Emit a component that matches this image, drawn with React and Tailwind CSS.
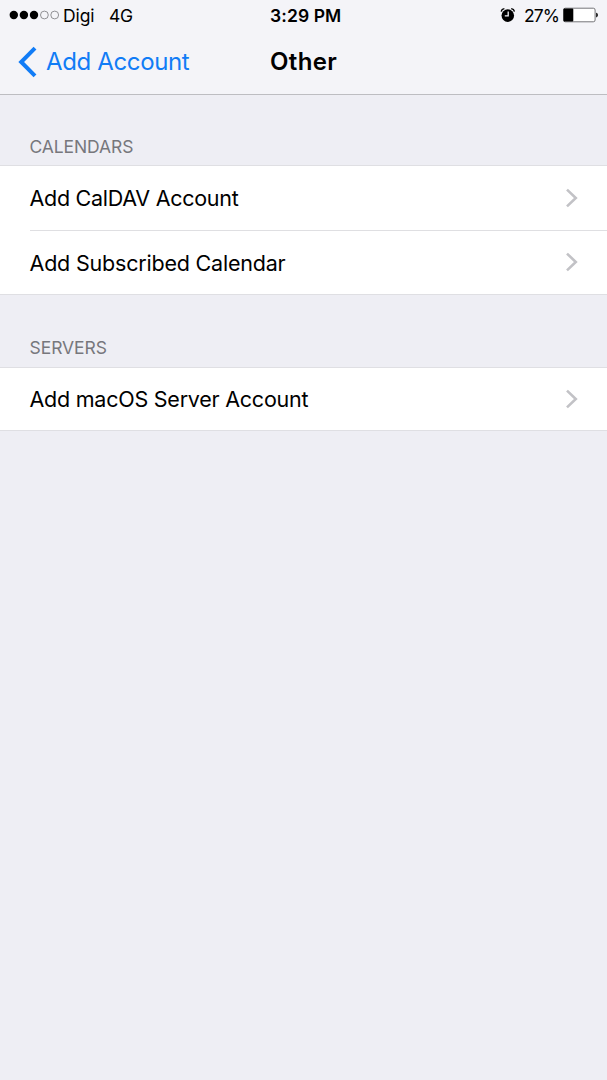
import React from 'react';

const sections = [
  {
    title: 'CALENDARS',
    titleClass: 'h-[70px] pb-[6px] tracking-[-0.1px]',
    rows: [
      { name: 'Add CalDAV Account', className: 'h-[64px] tracking-[-0.28px]' },
      { name: 'Add Subscribed Calendar', className: 'h-[63px] tracking-[-0.2px]', labelClass: 'pt-px' },
    ],
  },
  {
    title: 'SERVERS',
    titleClass: 'h-[72px] pb-[7px] tracking-[-0.05px]',
    rows: [{ name: 'Add macOS Server Account', className: 'h-[62px] tracking-[-0.24px]' }],
  },
];

function StatusBar() {
  return (
    <div className="grid grid-cols-[270px_1fr_108px] items-center h-[31px] text-[17.5px] leading-[31px] whitespace-nowrap">
      <div className="flex items-center pl-[9px]">
        <svg className="mb-px" width="51" height="10" viewBox="0 0 51 10">
          <circle cx="4.8" cy="5" r="4.2" />
          <circle cx="14.9" cy="5" r="4.2" />
          <circle cx="25" cy="5" r="4.2" />
          <circle cx="35.4" cy="5" r="3.9" fill="none" stroke="#77777b" strokeWidth="0.8" />
          <circle cx="45.7" cy="5" r="3.9" fill="none" stroke="#77777b" strokeWidth="0.8" />
        </svg>
        <span className="ml-[3px] w-[46px] tracking-[-0.1px]">Digi</span>
        <span className="tracking-[-0.2px]">4G</span>
      </div>
      <span className="font-semibold tracking-[0.1px]">3:29 PM</span>
      <div className="flex items-center">
        <svg className="mb-px ml-px" width="16" height="16" viewBox="0 0 16 16">
          <circle cx="7.8" cy="8.6" r="6.3" />
          <path d="M1.2 4.6Q1.6 2 4.4 1.6M14.4 4.6Q14 2 11.2 1.6" fill="none" stroke="#000" strokeWidth="1.3" />
          <path d="M8.2 4.6V8.8H4.8" fill="none" stroke="#f4f4f8" strokeWidth="1.3" />
        </svg>
        <span className="ml-[8px] w-[39px] tracking-[-0.9px]">27%</span>
        <svg className="mb-px" width="37" height="16" viewBox="0 0 37 16">
          <rect x="0.5" y="1.2" width="31.6" height="13.6" rx="1.8" fill="#fff" stroke="#66666a" strokeWidth="0.9" />
          <rect x="0.5" y="1.4" width="9.8" height="13.2" rx="1" />
          <path d="M33.2 5.7c2.2.5 2.2 4.2 0 4.7z" />
        </svg>
      </div>
    </div>
  );
}

function NavBar() {
  return (
    <div className="grid grid-cols-[270px_1fr] items-center h-[63px] pb-px text-[24px] leading-[30px] whitespace-nowrap">
      <div className="flex items-center pl-[18px] text-[#117cf6]">
        <svg width="20" height="32" viewBox="0 0 20 32" fill="none" stroke="currentColor" strokeWidth="4">
          <path d="M17 2.2 3.2 16 17 29.8" />
        </svg>
        <span className="ml-[8px] tracking-[-0.36px]">Add Account</span>
      </div>
      <h1 className="font-semibold tracking-[0.35px]">Other</h1>
    </div>
  );
}

function Chevron() {
  return (
    <svg className="shrink-0 mb-px" width="14" height="20" viewBox="0 0 14 20" fill="none" stroke="#c2c2c6" strokeWidth="2.6">
      <path d="M2 1.6 10.8 10 2 18.4" />
    </svg>
  );
}

export default function App() {
  return (
    <div className="w-[607px] h-[1080px] overflow-hidden bg-[#eeeef4] text-black font-['Inter','Liberation_Sans',sans-serif]">
      <header className="h-[95px] bg-[#f4f4f8] border-b border-[#bdbdc1]">
        <StatusBar />
        <NavBar />
      </header>

      <main>
        {sections.map((section) => (
          <section key={section.title}>
            <h2 className={`flex items-end pl-[29.5px] text-[17.5px] leading-[24px] text-[#77777c] ${section.titleClass}`}>
              {section.title}
            </h2>
            <ul className="bg-white border-y border-[#dfdfe3]">
              {section.rows.map((row, i) => (
                <li
                  key={row.name}
                  className={`ml-[29.5px] pr-[28px] flex items-center justify-between text-[21.5px] whitespace-nowrap ${row.className} ${
                    i > 0 ? 'border-t border-[#dfdfe2] box-content' : ''
                  }`}
                >
                  <span className={row.labelClass}>{row.name}</span>
                  <Chevron />
                </li>
              ))}
            </ul>
          </section>
        ))}
      </main>
    </div>
  );
}
